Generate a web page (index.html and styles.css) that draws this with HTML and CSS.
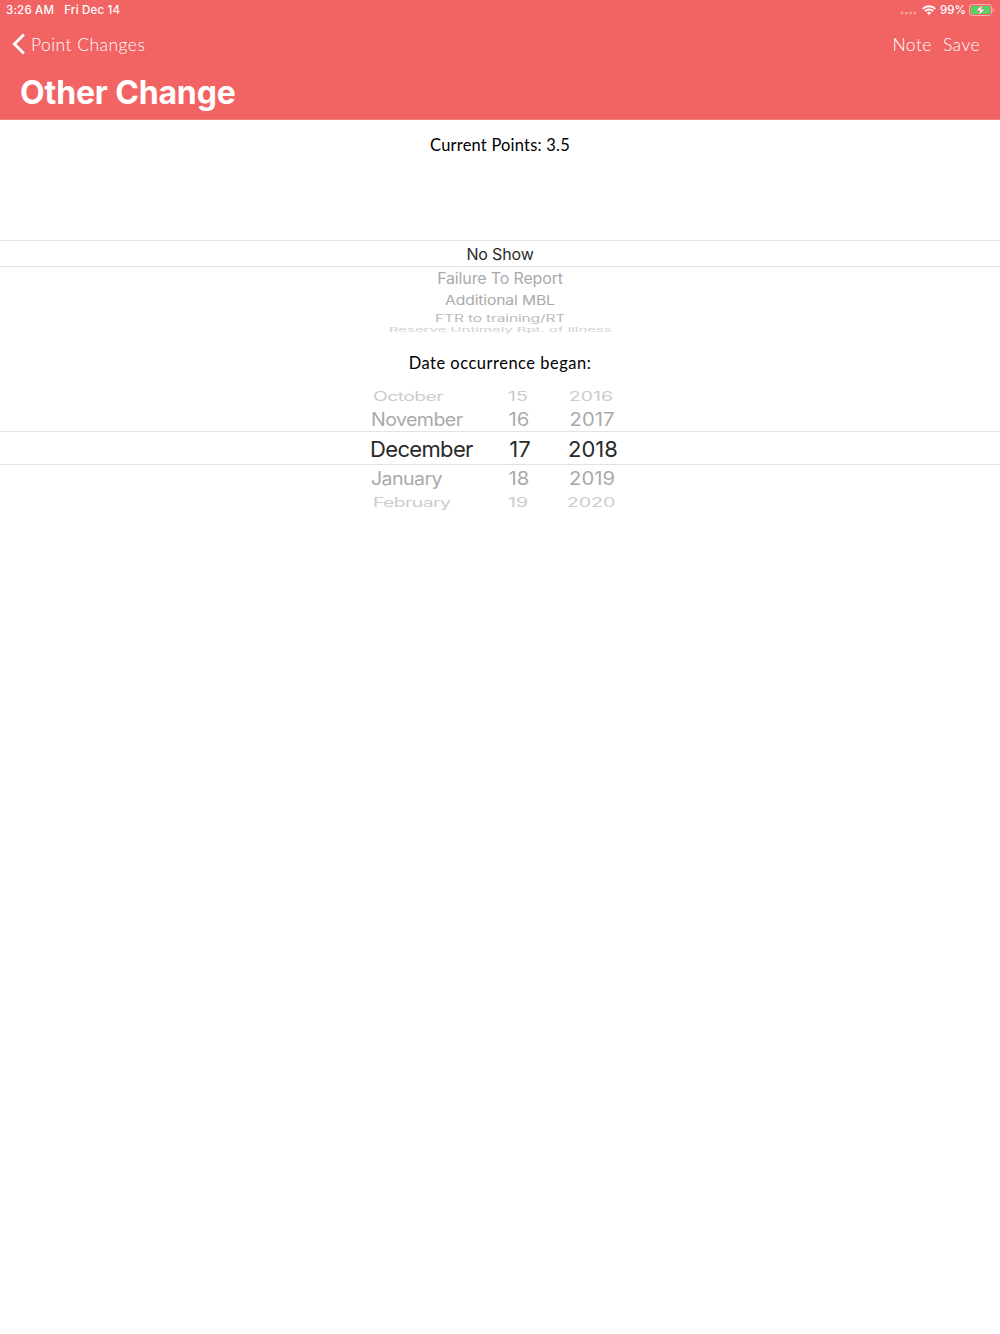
FILE: index.html
```html
<!DOCTYPE html>
<html lang="en">
<head>
    <meta charset="UTF-8">
    <meta name="viewport" content="width=device-width, initial-scale=1.0">
    <title>Other Change</title>
    <link rel="stylesheet" href="styles.css">
</head>
<body>
    <header id="top-bar">
        <div class="status-bar">
            <span class="time">3:26 AM</span>
            <span class="date">Fri Dec 14</span>
            <span class="status-icons">
                <svg class="signal" width="17" height="4" viewBox="0 0 17 4" fill="#fff">
                    <circle cx="2" cy="2" r="1.6"/>
                    <circle cx="6.3" cy="2" r="1.6"/>
                    <circle cx="10.6" cy="2" r="1.6"/>
                    <circle cx="14.9" cy="2" r="1.6"/>
                </svg>
                <svg class="wifi" width="14" height="10" viewBox="0 0 14 10" fill="none" stroke="#fff" stroke-width="1.9">
                    <path d="M.7 3.8a8.9 8.9 0 0 1 12.6 0"/>
                    <path d="M3 6.2a5.7 5.7 0 0 1 8 0"/>
                    <path d="M7 10L4.9 7.9a3 3 0 0 1 4.2 0z" fill="#fff" stroke="none"/>
                </svg>
                <span class="percent">99%</span>
                <svg class="battery" width="25" height="12" viewBox="0 0 25 12">
                    <rect x=".5" y=".5" width="22" height="11" rx="2.8" fill="none" stroke="#fff" stroke-opacity=".5"/>
                    <rect x="2" y="2" width="19" height="8" rx="1.4" fill="#4cd964"/>
                    <path d="M23.7 4v4c1.6-.6 1.6-3.4 0-4z" fill="#fff" fill-opacity=".5"/>
                    <path d="M13.4.8L6.8 6.7h4.1L9.6 11.2l6.6-5.9h-4.1z" fill="#fff" stroke="#f26363" stroke-width=".6"/>
                </svg>
            </span>
        </div>
        <nav class="nav-bar">
            <a class="back">
                <svg width="13" height="22" viewBox="0 0 13 22" fill="none" stroke="#fff" stroke-width="2.9">
                    <path d="M11.9 1.5L2.4 11l9.5 9.5"/>
                </svg>
                <span>Point Changes</span>
            </a>
            <a class="action note">Note</a>
            <a class="action save">Save</a>
        </nav>
        <h1>Other Change</h1>
    </header>

    <main>
        <p class="label points">Current Points: 3.5</p>

        <div class="picker reason-picker">
            <div class="row selected"><span>No Show</span></div>
            <div class="row next-1"><span>Failure To Report</span></div>
            <div class="row next-2"><span>Additional MBL</span></div>
            <div class="row next-3"><span>FTR to training/RT</span></div>
            <div class="row next-4"><span>Reserve Untimely Rpt. of Illness</span></div>
        </div>

        <p class="label began">Date occurrence began:</p>

        <div class="picker date-picker">
            <div class="row far above"><span class="month">October</span><span class="day">15</span><span class="year">2016</span></div>
            <div class="row near above"><span class="month">November</span><span class="day">16</span><span class="year">2017</span></div>
            <div class="row selected"><span class="month">December</span><span class="day">17</span><span class="year">2018</span></div>
            <div class="row near below"><span class="month">January</span><span class="day">18</span><span class="year">2019</span></div>
            <div class="row far below"><span class="month">February</span><span class="day">19</span><span class="year">2020</span></div>
        </div>
    </main>
</body>
</html>
```
FILE: styles.css
```css
body {
    font-family: Inter, "Liberation Sans", sans-serif;
    margin: 0;
    background-color: #fff;
    color: #000;
}

/* header */
#top-bar {
    height: 120px;
    box-sizing: border-box;
    background-color: #f26363;
    border-bottom: 1px solid #ee8080;
    color: #fff;
}

.status-bar {
    display: flex;
    align-items: center;
    height: 20px;
    padding: 0 6px;
    font-size: 11.5px;
    font-weight: 500;
    letter-spacing: 0.2px;
}

.date {
    margin-left: 10px;
}

.status-icons {
    display: flex;
    align-items: center;
    margin-left: auto;
}

.signal {
    opacity: 0.35;
    margin: 6px 5px 0 0;
}

.percent {
    margin: 0 3px 0 4px;
    letter-spacing: 0;
}

.nav-bar {
    display: flex;
    align-items: center;
    height: 48px;
    padding: 0 20px 0 12px;
    font-family: Lato, "Liberation Sans", sans-serif;
    font-size: 17.5px;
    font-weight: 300;
    letter-spacing: 0.45px;
}

.back {
    display: flex;
    align-items: center;
    gap: 6px;
    margin-right: auto;
}

.save {
    margin-left: 11px;
}

h1 {
    margin: 0;
    padding-left: 20px;
    font-size: 32px;
    line-height: 50px;
    font-weight: 700;
    letter-spacing: -0.15px;
}

/* labels */
.label {
    margin: 0;
    font-family: Lato, "Liberation Sans", sans-serif;
    font-size: 16.5px;
    line-height: 24px;
    text-align: center;
}

.points {
    padding-top: 13px;
    letter-spacing: 0.2px;
}

.began {
    padding-top: 16px;
    margin-bottom: 11px;
    letter-spacing: 0.5px;
}

/* pickers */
.row {
    color: #aaa;
    white-space: nowrap;
}

.row span {
    display: inline-block;
}

.row.selected {
    box-sizing: border-box;
    border-top: 1px solid #e2e2e2;
    border-bottom: 1px solid #e2e2e2;
    color: #2a2a2a;
}

.reason-picker {
    margin-top: 83px;
    text-align: center;
    font-size: 16px;
    letter-spacing: -0.15px;
}

.reason-picker .selected {
    height: 27px;
    line-height: 26px;
}

.next-1 {
    height: 22px;
    line-height: 22px;
}

.next-2 {
    height: 22px;
    line-height: 22px;
}

.next-2 span {
    transform: scale(0.98, 0.84);
}

.next-3 {
    height: 14px;
    line-height: 14px;
    color: #bbb;
}

.next-3 span {
    transform: scale(0.97, 0.63);
}

.next-4 {
    height: 10px;
    line-height: 10px;
    color: #d2d2d2;
}

.next-4 span {
    transform: scale(0.95, 0.4);
}

.date-picker {
    font-size: 22px;
}

.date-picker .row {
    display: grid;
    grid-template-columns: 125px 50px 96px;
    align-items: center;
    padding-left: 370px;
}

.date-picker .selected {
    height: 34px;
    line-height: 34px;
}

.month {
    transform-origin: left center;
    letter-spacing: -0.65px;
}

.day,
.year {
    text-align: center;
}

/* rows turn away from the viewer towards the ends of the wheel */
.near {
    height: 25px;
    line-height: 26px;
}

.near.below {
    height: 26px;
}

.near span {
    transform: translateX(-1px) scale(0.92, 0.82);
}

.near .month {
    transform: translateX(1px) scale(0.89, 0.82);
}

.far {
    height: 20px;
    line-height: 20px;
    color: #ccc;
}

.far.below {
    line-height: 22px;
}

.far span {
    transform: translateX(-2px) scale(0.89, 0.57);
}

.far .month {
    transform: translateX(3px) scale(0.88, 0.57);
}
```
